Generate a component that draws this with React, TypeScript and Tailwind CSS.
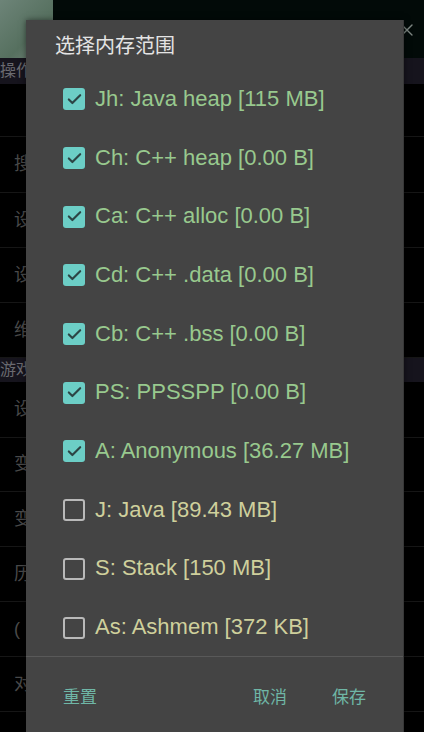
import { Check, X } from "lucide-react";

const bgRows = [
  { t: "（", h: "h-[53px]" },
  { t: "搜", h: "h-[56px]" },
  { t: "设", h: "h-[55px]" },
  { t: "设", h: "h-[55px]" },
  { t: "维", h: "h-[55px]" },
];
const bgRows2 = [
  { t: "设", h: "h-[56px]" },
  { t: "变", h: "h-[54px]" },
  { t: "变", h: "h-[55px]" },
  { t: "历", h: "h-[55px]" },
  { t: "(", h: "h-[55px]" },
  { t: "对", h: "h-[55px]" },
  { t: "", h: "h-[55px]" },
];

const items = [
  { label: "Jh: Java heap [115 MB]", on: true },
  { label: "Ch: C++ heap [0.00 B]", on: true },
  { label: "Ca: C++ alloc [0.00 B]", on: true },
  { label: "Cd: C++ .data [0.00 B]", on: true },
  { label: "Cb: C++ .bss [0.00 B]", on: true },
  { label: "PS: PPSSPP [0.00 B]", on: true },
  { label: "A: Anonymous [36.27 MB]", on: true },
  { label: "J: Java [89.43 MB]", on: false },
  { label: "S: Stack [150 MB]", on: false },
  { label: "As: Ashmem [372 KB]", on: false },
];

const font = "font-['Liberation_Sans','Noto_Sans_CJK_SC',sans-serif]";

export default function App() {
  return (
    <div className={`w-[424px] h-[732px] relative overflow-hidden bg-black ${font}`}>
      {/* dimmed screen behind the dialog */}
      <div className="flex flex-col">
        <div className="h-[58px] flex flex-row bg-[#020a08]">
          <div className="w-[53px] bg-[linear-gradient(135deg,#6d8478,#56705f_60%,#7a8a80)]" />
          <div className="flex-1" />
          <div className="w-[28px] flex items-start justify-center pt-[20px] pr-[6px]">
            <X size={20} strokeWidth={1.6} className="text-[#7d8682]" />
          </div>
        </div>
        <div className="h-[26px] bg-[#16141d] flex items-center text-[16px] text-[#6a6a70] leading-none">
          操作
        </div>
        {bgRows.map((r, i) => (
          <div
            key={i}
            className={`${r.h} border-b border-[#161616] flex items-center pl-[14px] text-[18px] text-[#4a4a4a]`}
          >
            {r.t}
          </div>
        ))}
        <div className="h-[24px] bg-[#16141d] flex items-center text-[16px] text-[#6a6a70] leading-none">
          游戏
        </div>
        {bgRows2.map((r, i) => (
          <div
            key={i}
            className={`${r.h} border-b border-[#161616] flex items-center pl-[14px] text-[18px] text-[#4a4a4a]`}
          >
            {r.t}
          </div>
        ))}
      </div>

      {/* dialog */}
      <div className="absolute left-[26px] top-[20px] w-[378px] h-[740px] bg-[#444444] border-r border-[#383838] shadow-[0_0_6px_rgba(0,0,0,0.5)] flex flex-col">
        <div className="h-[50px] pl-[29px] pt-[12px] text-[20px] leading-[26px] text-[#e4e4e4] font-['Noto_Sans_CJK_SC',sans-serif]">
          选择内存范围
        </div>
        <div className="flex flex-col">
          {items.map((it) => (
            <div key={it.label} className="h-[58.7px] flex flex-row items-center pl-[37px] gap-[10px]">
              {it.on ? (
                <div className="w-[22px] h-[22px] rounded-[3px] bg-[#6ccec6] flex items-center justify-center">
                  <Check size={17} strokeWidth={3} className="text-[#2c4545]" />
                </div>
              ) : (
                <div className="w-[22px] h-[22px] rounded-[3px] border-2 border-[#b9b9b9]" />
              )}
              <span
                className={`text-[22px] leading-none pb-[1px] ${
                  it.on ? "text-[#98c98e]" : "text-[#cfd09c]"
                }`}
              >
                {it.label}
              </span>
            </div>
          ))}
        </div>
        <div className="h-px bg-[#595959] mt-[-1px]" />
        <div className="h-[78px] flex flex-row items-center pl-[37px] pr-[37px] text-[17px] text-[#6fb6a6] pb-[1px] font-['Noto_Sans_CJK_SC',sans-serif]">
          <span>重置</span>
          <span className="ml-auto">取消</span>
          <span className="ml-[45px]">保存</span>
        </div>
      </div>
    </div>
  );
}
